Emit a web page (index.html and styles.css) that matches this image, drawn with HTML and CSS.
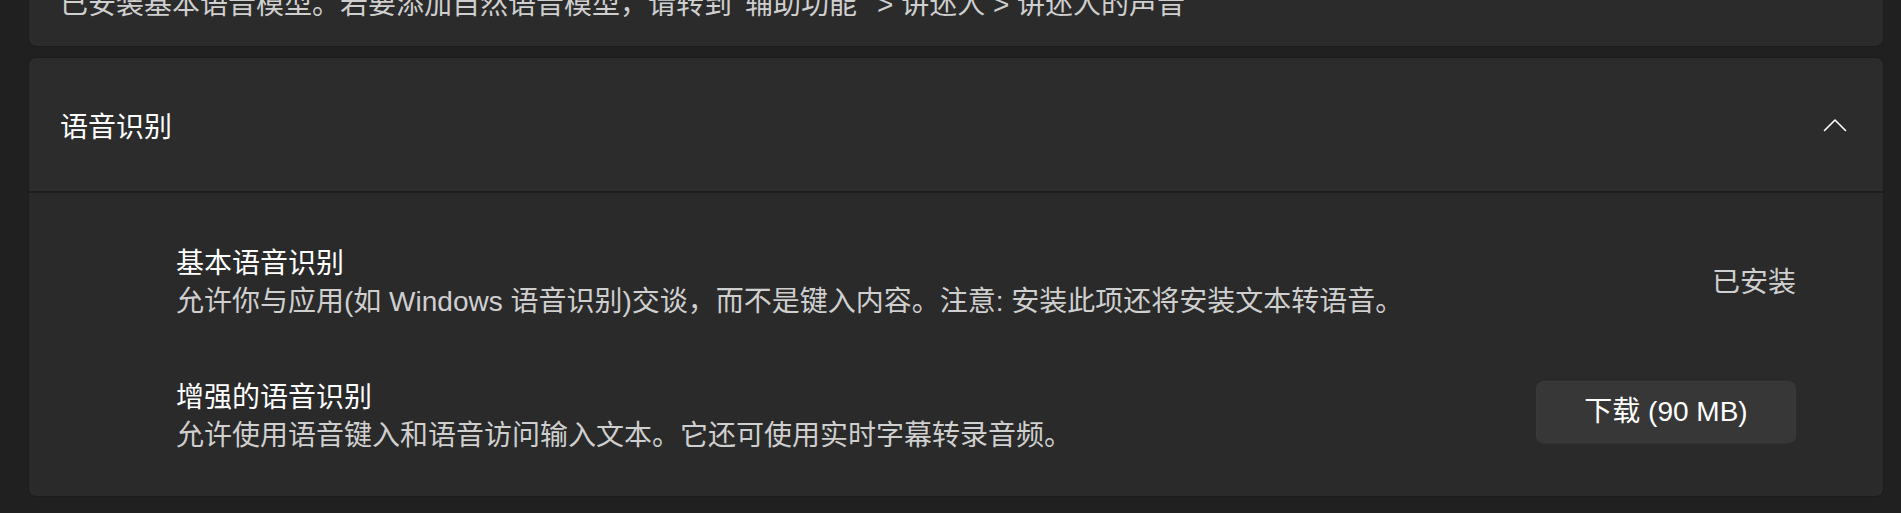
FILE: index.html
```html
<!DOCTYPE html>
<html lang="zh-CN">
<head>
<meta charset="utf-8">
<title>语音</title>
<link rel="stylesheet" href="styles.css">
</head>
<body>
<div class="viewport">
  <div class="page">
    <section class="card note">
      <p class="secondary">已安装基本语音模型。若要添加自然语音模型，请转到<span class="q q-open">“</span>辅助功能<span class="q q-close">”</span>&gt; 讲述人 &gt; 讲述人的声音</p>
    </section>

    <section class="expander">
      <header class="expander-head">
        <span class="head-title">语音识别</span>
        <svg class="chevron" width="24" height="14" viewBox="0 0 24 14" aria-hidden="true">
          <polyline points="1.5,12.5 12,2 22.5,12.5" fill="none" stroke="#ffffff" stroke-width="1.6" stroke-linecap="round" stroke-linejoin="round"/>
        </svg>
      </header>
      <div class="expander-body">
        <div class="row">
          <div class="row-text">
            <div class="row-title">基本语音识别</div>
            <div class="secondary">允许你与应用(如 Windows 语音识别)交谈，而不是键入内容。注意: 安装此项还将安装文本转语音。</div>
          </div>
          <div class="secondary status">已安装</div>
        </div>
        <div class="row">
          <div class="row-text">
            <div class="row-title">增强的语音识别</div>
            <div class="secondary">允许使用语音键入和语音访问输入文本。它还可使用实时字幕转录音频。</div>
          </div>
          <button class="btn" type="button">下载 (90 MB)</button>
        </div>
      </div>
    </section>
  </div>
</div>
</body>
</html>
```
FILE: styles.css
```css
html, body {
  margin: 0;
  padding: 0;
  background: #202020;
}

body {
  font-family: "Segoe UI", "Liberation Sans", "Noto Sans CJK SC", sans-serif;
  font-size: 28px;
  line-height: 38px;
  color: #ffffff;
}

.viewport {
  height: 513px;
  overflow: hidden;
}

/* list is scrolled, so the first card starts above the top edge */
.page {
  margin-top: -14px;
  padding: 0 17px 0 28px;
  display: flex;
  flex-direction: column;
  gap: 10px;
}

.secondary {
  color: #cfcfcf;
}

p {
  margin: 0;
}

/* CJK quotation marks, set tight like the system UI font */
.q {
  font-family: "Noto Sans CJK SC", sans-serif;
  line-height: 1;
}

.q-open {
  letter-spacing: -15px;
}

.q-close {
  letter-spacing: -8px;
}

.card {
  background: #2b2b2b;
  border: 1px solid #1c1c1c;
  border-top: none;
  border-radius: 0 0 8px 8px;
}

.note {
  padding: 0 31px 22px;
}

.expander {
  border: 1px solid #1c1c1c;
  border-radius: 8px;
  overflow: hidden;
  background: #2a2a2a;
}

.expander-head {
  height: 133px;
  padding: 0 36px 0 31px;
  display: flex;
  align-items: center;
  justify-content: space-between;
  background: #2c2c2c;
  border-bottom: 2px solid #1d1d1d;
}

.head-title {
  padding-top: 6px;
}

.chevron {
  display: block;
}

.expander-body {
  padding: 52px 87px 41px 147px;
  display: flex;
  flex-direction: column;
  gap: 58px;
}

.row {
  display: flex;
  align-items: center;
  justify-content: space-between;
}

.row-title {
  color: #ffffff;
}

.status {
  line-height: 38px;
}

.btn {
  width: 260px;
  height: 63px;
  margin-top: -10px;
  font: inherit;
  color: #ffffff;
  background: #373737;
  border: 1px solid #3a3a3a;
  border-bottom-color: #303030;
  border-radius: 8px;
  padding: 0;
}
```
